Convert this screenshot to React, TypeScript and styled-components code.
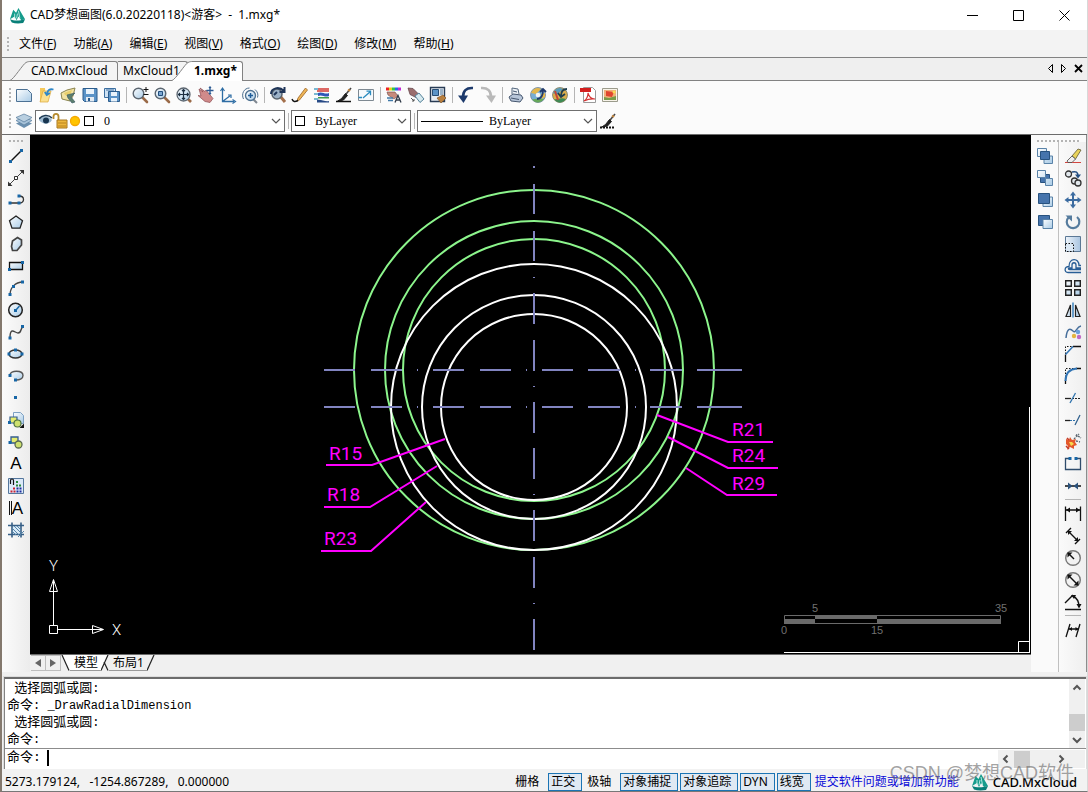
import React from "react";
import styled, { createGlobalStyle } from "styled-components";

const UI = '"Noto Sans", "Noto Sans CJK SC", sans-serif';
const EDGE = "#828282";

const Global = createGlobalStyle`
  * { box-sizing: border-box; }
  body { margin: 0; background: #f0f0f0; font: 12px/16px ${UI}; color: #000; }
  button, input, select { font: inherit; color: inherit; margin: 0; padding: 0; border: 0; background: none; border-radius: 0; }
  svg { display: block; }
`;

const Window = styled.div`
  display: flex;
  flex-direction: column;
  min-height: 100vh;
  border-left: 2px solid #84796e;
  border-right: 1px solid #d8d8d8;
  border-bottom: 1px solid #777;
`;

/* title bar */
const TitleBar = styled.header`
  display: flex;
  align-items: center;
  height: 30px;
  padding-left: 7px;
  background: #fff;
`;
const Title = styled.h1`
  flex: 1;
  margin: 0 0 0 4px;
  font-size: 12px;
  font-weight: 400;
  white-space: pre;
`;
const WinButton = styled.button`
  display: flex;
  align-items: center;
  justify-content: center;
  width: 46px;
  height: 28px;
`;

/* menu bar */
const MenuBar = styled.nav`
  display: flex;
  align-items: center;
  height: 27px;
  padding-left: 5px;
  background: #f3f3f3;
`;
const Grip = styled.span<{ $wide?: number }>`
  flex: none;
  width: ${(p) => (p.$wide ? `${p.$wide}px` : "2px")};
  height: ${(p) => (p.$wide ? "2px" : "14px")};
  margin-right: ${(p) => (p.$wide ? "0" : "2px")};
  background: repeating-linear-gradient(${(p) => (p.$wide ? "90deg" : "180deg")}, #b4b4b4 0 2px, transparent 2px 4px);
`;
const MenuItem = styled.button`
  padding: 0 9px 0 8px;
  height: 22px;
  white-space: nowrap;
`;

/* document tabs */
const TabStrip = styled.div`
  display: flex;
  align-items: flex-end;
  height: 24px;
  padding: 0 3px 0 8px;
  border-top: 1px solid ${EDGE};
  border-bottom: 1px solid ${EDGE};
  background: #efefef;
`;
const DocTabButton = styled.button<{ $active?: boolean }>`
  display: flex;
  position: relative;
  z-index: ${(p) => (p.$active ? 1 : 0)};
  margin-left: ${(p) => (p.$active ? "-16px" : "0")};
  margin-bottom: ${(p) => (p.$active ? "-1px" : "0")};
  height: ${(p) => (p.$active ? "20px" : "19px")};
  font-weight: ${(p) => (p.$active ? 700 : 400)};
`;
const TabLabel = styled.span<{ $active?: boolean; $width: number; $pad: number }>`
  height: 100%;
  width: ${(p) => p.$width}px;
  padding-left: ${(p) => p.$pad}px;
  text-align: left;
  line-height: 18px;
  border-top: 1px solid ${EDGE};
  border-right: 1px solid ${EDGE};
  border-top-right-radius: 3px;
  background: ${(p) => (p.$active ? "#fff" : "#f4f4f4")};
`;
const TabNav = styled.div`
  display: flex;
  gap: 2px;
  margin-left: auto;
  padding-bottom: 2px;
  align-self: center;
`;
const SmallButton = styled.button`
  display: flex;
  align-items: center;
  justify-content: center;
  width: 12px;
  height: 16px;
`;

/* toolbars */
const ToolArea = styled.div`
  background: #fbfbfb;
  border-bottom: 1px solid #6c6c6c;
`;
const ToolRow = styled.div<{ $height: number }>`
  display: flex;
  align-items: center;
  height: ${(p) => p.$height}px;
  padding-left: 7px;
`;
const IconButton = styled.button`
  flex: none;
  display: flex;
  align-items: center;
  justify-content: center;
  width: 22px;
  height: 22px;
`;
const Divider = styled.span<{ $flat?: boolean }>`
  flex: none;
  width: ${(p) => (p.$flat ? "16px" : "1px")};
  height: ${(p) => (p.$flat ? "1px" : "16px")};
  margin: ${(p) => (p.$flat ? "2px 0 3px" : "0 2px 0 3px")};
  background: #b5b5b5;
`;
const Combo = styled.div<{ $width: number }>`
  flex: none;
  display: flex;
  align-items: center;
  width: ${(p) => p.$width}px;
  height: 22px;
  padding: 0 3px;
  border: 1px solid #707070;
  background: #fff;
`;
const ComboSelect = styled.select<{ $pad: number }>`
  flex: 1;
  min-width: 0;
  height: 20px;
  appearance: none;
  padding-left: ${(p) => p.$pad}px;
  font-family: "Liberation Serif", "Noto Sans CJK SC", serif;
`;
const Swatch = styled.span`
  width: 10px;
  height: 10px;
  border: 1px solid #000;
`;
const LineSample = styled.span`
  width: 62px;
  height: 1px;
  background: #000;
`;

/* work area */
const Work = styled.main`
  flex: 1;
  display: flex;
  background: #f0f0f0;
`;
const LeftPanel = styled.aside`
  flex: none;
  width: 28px;
  padding-top: 5px;
  display: flex;
  flex-direction: column;
  align-items: center;
  background: linear-gradient(90deg, #fbfbfb, #ececec);
`;
const ToolColumn = styled.div`
  padding-top: 3px;
`;
const RightPanel = styled.aside`
  flex: none;
  width: 56px;
  display: flex;
  flex-direction: column;
  background: #fafafa;
  border-right: 1px solid #8c8c8c;
`;
const RightGrip = styled.div`
  padding: 5px 0 0 6px;
  display: flex;
`;
const RightColumns = styled.div`
  flex: 1;
  display: flex;
`;
const RightColumn = styled.div<{ $last?: boolean }>`
  width: ${(p) => (p.$last ? "27px" : "28px")};
  padding-top: 3px;
  display: flex;
  flex-direction: column;
  align-items: center;
  border-right: ${(p) => (p.$last ? "0" : "1px solid #c0c0c0")};
  background: ${(p) => (p.$last ? "linear-gradient(90deg, #fafafa, #efefef)" : "#fafafa")};
`;
const Center = styled.section`
  flex: 1;
  min-width: 0;
  display: flex;
  flex-direction: column;
`;
const Canvas = styled.div`
  flex: 1;
  min-height: 400px;
  display: flex;
  background: #000;
  & > svg { flex: 1; min-width: 0; }
`;
const LayoutTabs = styled.div`
  display: flex;
  height: 18px;
  padding-left: 1px;
  background: #f0f0f0;
  border-top: 1px solid #6c6c6c;
`;
const ArrowBox = styled.button`
  display: flex;
  align-items: center;
  justify-content: center;
  width: 15px;
  height: 16px;
  border: 1px solid #bdbdbd;
  border-left: 0;
`;
const LayoutTab = styled.button<{ $active?: boolean }>`
  height: 16px;
  line-height: 15px;
  padding: 0 3px 0 4px;
  background: ${(p) => (p.$active ? "#fff" : "transparent")};
  border-bottom: 1px solid #9a9a9a;
`;

/* command window */
const Command = styled.section`
  margin: 5px 1px 0 2px;
  border-top: 2px solid #6c6c6c;
  border-left: 1px solid #828282;
  background: #fff;
  font: 13px/17px "Liberation Mono", "Noto Sans CJK SC", monospace;
  outline: 1px solid #dcdcdc;
`;
const History = styled.div`
  display: flex;
  height: 70px;
  border-bottom: 1px solid #8c8c8c;
`;
const Log = styled.div`
  flex: 1;
  padding: 1px 0 0 2px;
`;
const LogLine = styled.div`
  height: 17px;
  white-space: pre;
`;
const Latin = styled.span`
  font-size: 12px;
`;
const VScroll = styled.div`
  display: flex;
  flex-direction: column;
  justify-content: space-between;
  align-items: center;
  width: 16px;
  margin-right: 1px;
  background: #f0f0f0;
`;
const Thumb = styled.span<{ $flat?: boolean }>`
  width: 16px;
  height: 17px;
  background: #cdcdcd;
  margin: ${(p) => (p.$flat ? "0 auto 0 0" : "auto 0 0")};
`;
const ScrollButton = styled.button`
  display: flex;
  align-items: center;
  justify-content: center;
  width: 16px;
  height: 17px;
`;
const Prompt = styled.div`
  display: flex;
  align-items: flex-start;
  height: 20px;
  padding: 0 1px 0 2px;
`;
const Caret = styled.span`
  width: 2px;
  height: 16px;
  margin: 1px 0 0 6px;
  background: #000;
`;
const PromptInput = styled.input`
  flex: 1;
  min-width: 0;
  outline: none;
`;
const HScroll = styled.div`
  display: flex;
  align-items: center;
  align-self: center;
  width: 71px;
  height: 18px;
  background: #f0f0f0;
`;
const Corner = styled.span`
  align-self: center;
  width: 16px;
  height: 18px;
  background: #f0f0f0;
`;

/* status bar */
const Status = styled.footer`
  position: relative;
  display: flex;
  align-items: center;
  height: 22px;
  padding: 3px 10px 0 3px;
  background: #f2f2f2;
`;
const Coords = styled.output`
  flex: 1;
  white-space: pre;
`;
const Toggle = styled.button<{ $on?: boolean }>`
  height: 18px;
  margin-right: 2px;
  padding: 0 6px 0 2px;
  line-height: 16px;
  white-space: nowrap;
  border: 1px solid ${(p) => (p.$on ? "#1b74b4" : "transparent")};
  background: ${(p) => (p.$on ? "#dfe9f3" : "transparent")};
`;
const Feedback = styled.a`
  margin: 0 12px 0 2px;
  color: #0a0ad8;
  text-decoration: none;
  white-space: nowrap;
`;
const Brand = styled.span`
  margin-left: 4px;
  font-size: 13px;
  font-weight: 500;
`;
const Watermark = styled.span`
  position: absolute;
  right: 13px;
  bottom: 6px;
  font: 18px/24px "Liberation Sans", "Noto Sans CJK SC", sans-serif;
  color: rgba(110, 110, 110, 0.65);
  white-space: nowrap;
  pointer-events: none;
`;

const B = "#1766a6";
const K = "#111";
const ICE = "url(#ice)";
const BLUE = "url(#blue)";

const Dots = ({ at }: { at: [number, number][] }) => (
  <>{at.map(([x, y]) => <rect key={`${x}-${y}`} x={x - 1.5} y={y - 1.5} width="3" height="3" fill={B} />)}</>
);
const Lens = ({ children }: { children?: React.ReactNode }) => (
  <>
    <path d="M11 11l5 5" stroke="#9a6a48" strokeWidth="2.6" strokeLinecap="round" />
    <circle cx="7.5" cy="7.5" r="5.3" fill={ICE} stroke="#5c6670" strokeWidth="1.4" />
    {children}
  </>
);
const Brush = () => (
  <>
    <path d="M16 2l-6.500 8" stroke="#444" strokeWidth="1.6" />
    <path d="M10.500 7.500l2 2-4 4.500-6 1.200 4-2.700z" fill="#222" stroke="#222" />
    <path d="M13 3.500l2 1.500" stroke="#c98a42" strokeWidth="2" />
  </>
);

const icons: Record<string, React.ReactNode> = {
  new: <path d="M1.500 3.500h11l4 4v8h-15z" fill={ICE} stroke="#4c7194" />,
  open: <><path d="M3 2h5l1 14H3z" fill="#f6c95b" /><path d="M3 16l3-11h8l-3 11z" fill="#fbe08f" stroke="#dba63a" strokeWidth=".7" /><path d="M16.500 3.500c-4-1-6 1-6.500 4.500M7.800 6l2 3 3-2" fill="none" stroke="#2f87c8" strokeWidth="1.800" /></>,
  saveAs: <><path d="M2 7l6-3 8-2-2 8-3 5-8-2z" fill="#f2e2a2" stroke="#8a8450" /><path d="M5 7l8-3-2 6-5-1z" fill="#e9cf6c" /><path d="M8 9l8-2-4 4 4 5-3 1-4-5z" fill="#5b7f6e" stroke="#3e5d66" strokeWidth=".7" /></>,
  save: <><path d="M2 2.500h14v13H3.500L2 14z" fill="#5b93c7" stroke="#2c5d8d" /><path d="M5 3h8v5H5z" fill="#eaf3fb" /><path d="M5 11h8v4.500H5z" fill="#e4ebf2" /><path d="M7 12h2v3H7z" fill="#2c5d8d" /></>,
  saveAll: <><path d="M1.500 2.500h11v9h-11z" fill="#cfe2f3" stroke="#3c6fa0" /><path d="M3 4h8" stroke="#3c6fa0" /><path d="M5.500 5.500h11v10h-11z" fill="#5b93c7" stroke="#2c5d8d" /><path d="M8 6h6v4H8zM8 12h6v3.500H8z" fill="#eaf3fb" /></>,
  zoomPm: <Lens><path d="M12.500 3.500h5M15 1v5M12.500 8.500h5" stroke={K} /></Lens>,
  zoomWin: <Lens><path d="M5.500 5.500h4v4h-4z" fill="#7ba6d0" stroke="#224f7e" /></Lens>,
  zoomExt: <><path d="M12 12l4 4" stroke="#9a6a48" strokeWidth="2.600" /><circle cx="8.500" cy="8.500" r="6.500" fill={ICE} stroke="#5c6670" strokeWidth="1.300" /><path d="M8.500 3.500v10M3.500 8.500h10M7 5l1.500-1.500L10 5M7 12l1.500 1.500L10 12M5 7L3.500 8.500 5 10M12 7l1.500 1.500L12 10" fill="none" stroke="#1d2f42" strokeWidth="1.200" /></>,
  pan: <><path d="M2 3l4 3-3-4 5 3.500 1-1.500 7 8.500-3 4-5-1-7-6 3 .5z" fill="#d08a8a" stroke="#8d4a50" strokeWidth=".7" /><path d="M13 1v7M9.500 4.500h7M12 2l1-1 1 1M12 7l1 1 1-1" fill="none" stroke="#2d5b93" strokeWidth="1.300" /></>,
  axes: <><path d="M3.500 3v12.500H15M3.500 15.500l8-6" fill="none" stroke="#2e6da4" strokeWidth="1.300" /><path d="M1.500 5l2-3 2 3M13.500 13.500l3 2-3 2M9 9h3v3" fill="none" stroke="#2e6da4" strokeWidth="1.200" /></>,
  zoomRt: <><path d="M12 13l4 4" stroke="#7f8790" strokeWidth="2" /><circle cx="9.500" cy="9.500" r="5" fill={ICE} stroke="#4d7090" strokeWidth="1.300" /><path d="M7 9.500h5M9.500 7v5" stroke="#1e5d9a" strokeWidth="1.500" /><path d="M2.500 13C0 8 3 2 8.500 2M14 3.500c2.500 2 3.500 5 2.500 8" fill="none" stroke="#4d7090" /></>,
  find: <><path d="M11 10l5 6" stroke="#a4704c" strokeWidth="3" /><circle cx="8" cy="8" r="5" fill="#9cb2c8" stroke="#59636d" strokeWidth="1.500" /><path d="M2 8c0-6 8-8 13-3M15.500 1v5l-5 0M5 9l3-3" fill="none" stroke="#1f3558" strokeWidth="2" /></>,
  pencil: <><path d="M7 12L14.500 2l2 2-8 10-2.500 1z" fill="#eeb556" stroke="#9b6326" strokeWidth=".8" /><path d="M1 13c1 3 3 3 6 1.500" fill="none" stroke={K} strokeWidth="1.400" /></>,
  layersCol: <><path d="M4 3h12M4 5h12" stroke="#d43a34" strokeWidth="1.700" /><path d="M1 3h4M1 8h5M1 13h4" stroke="#79b8d2" strokeWidth="2" /><path d="M5 7c4-2 7 2 11 0v3c-4 2-7-2-11 0z" fill="#2f57b8" /><path d="M5 11h11v1.500H5z" fill="#3d9c4b" /><path d="M4 14c4-1 8 2 12 1v1.500H4z" fill="#274a86" /></>,
  brush: <><Brush /><path d="M1 15.500h15" stroke={K} strokeWidth="1.500" /></>,
  linkOut: <><path d="M1.500 3.500h15v11h-15z" fill="#f7fafc" stroke="#7e8992" /><path d="M5 11.500h-3.500M6 12l7.500-6.500M9.500 5.200h4v4" fill="none" stroke="#2b8bbf" strokeWidth="1.300" /></>,
  palette: <><path d="M1 1.500h3v3H1z" fill="#e22" /><path d="M4 1.500h3v3H4z" fill="#e5d51c" /><path d="M7 1.500h3v3H7z" fill="#32c44a" /><path d="M10 1.500h3v3h-3z" fill="#286ae4" /><path d="M13 1.500h3v3h-3z" fill="#c22ad2" /><path d="M2 6h8l3 4-4 3-6-4z" fill="#c78a7b" stroke="#724c44" strokeWidth=".6" /><path d="M2 12h6M3 14.500h5" stroke="#4079a8" strokeWidth="1.300" /><path d="M10 16.500l3-7 3 7M11 14h4" fill="none" stroke="#303a48" strokeWidth="1.300" /></>,
  matchProp: <><path d="M1 2l5 .5 6 6-3 3-6-3z" fill="#9a6d6d" stroke="#5d3e45" strokeWidth=".7" /><path d="M8 10l4-3 5 6-4 3.500z" fill="#d6e9ef" stroke="#56839a" /><path d="M4 12l3 3M7 13v2H5" stroke="#555" fill="none" /></>,
  block: <><path d="M1.500 1.500h14v14h-14z" fill="#e8edf3" stroke="#293c55" strokeWidth="1.400" /><path d="M3.500 3.500h6v6h-6z" fill="#5b93c7" stroke="#274d75" /><path d="M11 3h3v6h-3z" fill="#9db4c9" /><path d="M8 12l6-3 3 3-5 5z" fill="#b9803f" stroke="#754c22" strokeWidth=".6" /></>,
  undo: <><path d="M16 2C9 1.500 6 5 6 11" fill="none" stroke="#1d3a6c" strokeWidth="2.600" /><path d="M1 9.500h10L6.500 17z" fill="#1d3a6c" /></>,
  redo: <><path d="M2 2C9 1.500 12 5 12 11" fill="none" stroke="#b9b9b9" strokeWidth="2.600" /><path d="M7 9.500h10L12.500 17z" fill="#b9b9b9" /></>,
  print: <><path d="M5 8V2l6 1 1 5" fill="#edf2f7" stroke="#54677d" /><path d="M2 11l4-3 8 1 2 3-3 4-9-1z" fill="#b7c5d8" stroke="#46576f" /><path d="M4 12l8 1.500M6 5l4 1" stroke="#46576f" /></>,
  world1: <><circle cx="9" cy="9" r="7.500" fill="#79aed2" stroke="#687989" strokeWidth=".7" /><path d="M2 7c2-5 7-6 10-4L7 8z" fill="#e4b74c" /><path d="M3 13c4 1 6-2 12 0-3 4-9 5-12 0z" fill="#66a85a" /><path d="M12 8l4-1 0 4-3 2z" fill="#e4b74c" /><circle cx="9" cy="9" r="2.300" fill="#f4f4f4" /><path d="M8 13c5 0 6-5 6-9M11 6l3-3 3 3" fill="none" stroke="#223a6c" strokeWidth="1.800" /></>,
  world2: <><circle cx="9" cy="9" r="7.500" fill="#d9ad4d" stroke="#6a7062" strokeWidth=".7" /><path d="M2 7c2-5 7-6 10-4L6 9z" fill="#5a9bb8" /><path d="M3 13c4 1 6-2 12 0-3 4-9 5-12 0z" fill="#3d8a55" /><path d="M4 5l3 9" stroke="#c44434" strokeWidth="2" /><path d="M16 3c-4 0-6 2-6 7M7 7l3 4 4-3" fill="none" stroke="#1f3e4e" strokeWidth="1.800" /></>,
  pdf: <><path d="M4.500 1.500h9l3 3v12h-12z" fill="#fff" stroke="#9a9a9a" /><path d="M1 2h11v4H1z" fill="#d41f1f" /><path d="M5 15c3-2 4-5 4-8 1 4 3 6 7 6-4-.5-7 0-11 2" fill="none" stroke="#d43333" strokeWidth="1.100" /></>,
  image: <><path d="M1.500 2.500h15v13h-15z" fill="#f8f4ea" stroke="#9b9b8c" /><path d="M3 4h12v10H3z" fill="#f1b07a" /><path d="M5 5l8 1-2 5-6-1z" fill="#e0452e" /><path d="M3 11l5 1 7-2v4H3z" fill="#7a9b48" /><circle cx="13" cy="6" r="1.500" fill="#f8df52" /></>,
  layers: <><path d="M9 8l8 3.500L9 16 1 11.500z" fill="#6a8faf" /><path d="M9 5l8 3.500L9 13 1 8.500z" fill="#a8c3d9" stroke="#5c7f9f" strokeWidth=".7" /><path d="M9 2l8 3.500L9 10 1 5.500z" fill="#b9cfe0" stroke="#55789a" strokeWidth=".7" /></>,
  brushDash: <><Brush /><path d="M1 15.500h15" stroke={K} strokeWidth="2" strokeDasharray="2 1" /></>,

  line: <><path d="M3.500 14.500l11-11" stroke={K} strokeWidth="1.500" /><Dots at={[[3.500, 14.500], [14.500, 3.500]]} /></>,
  xline: <><path d="M2 16L16 2" stroke="#444" /><path d="M1 12.500V17h4.500zM17 5.500V1h-4.500z" fill="#333" /><path d="M7.500 7.500h3v3h-3z" fill="#fff" stroke="#333" /></>,
  pline: <><path d="M3 12h9M12 5c6 0 6 7 0 7" fill="none" stroke="#333" strokeWidth="1.300" /><Dots at={[[3, 12], [12, 5], [12, 12]]} /></>,
  polygon: <path d="M9 3l6.500 4.800L13 15.200H5L2.500 7.800z" fill={ICE} stroke="#222" strokeWidth="1.300" />,
  freePoly: <path d="M5.500 6l5-3.500 4 2.500v5L10 15.500H5.500l-1-4z" fill={ICE} stroke="#444" strokeWidth="1.700" />,
  rect: <><path d="M2.500 5.500h13v7h-13z" fill={ICE} stroke={K} strokeWidth="1.300" /><Dots at={[[2.500, 12.500], [15.500, 5.500]]} /></>,
  arc: <><path d="M3 16C3 9 8 3 16 3" fill="none" stroke="#444" strokeWidth="1.300" /><Dots at={[[3, 15.500], [6.500, 7.500], [15.500, 3]]} /></>,
  circle: <><circle cx="8.500" cy="9" r="6.800" fill={ICE} stroke="#222" strokeWidth="1.500" /><path d="M8.500 9.500l4-4.500" stroke={B} strokeWidth="1.400" /><Dots at={[[8.500, 9.500]]} /></>,
  spline: <><path d="M3 15c0-12 5-5 8-5 4 0 2-5 5-6" fill="none" stroke="#444" strokeWidth="1.400" /><Dots at={[[3, 15], [15.500, 3.500]]} /></>,
  ellipse: <><ellipse cx="8.500" cy="9" rx="6.500" ry="4" fill={ICE} stroke="#333" strokeWidth="1.400" /><Dots at={[[2, 9], [15, 9], [8.500, 5]]} /></>,
  ellArc: <><path d="M3 8c0-5 13-5 13 .5 0 3-3 4.500-7 4.500" fill={ICE} stroke="#555" strokeWidth="1.400" /><Dots at={[[3, 8.500], [8.500, 13]]} /></>,
  point: <Dots at={[[8.500, 8.500]]} />,
  insert: <><path d="M6.500 1.500h7l3 3v8h-10z" fill={ICE} stroke="#7da1c4" /><path d="M3 6h7v6H3z" fill="#e6ed70" stroke="#345e91" strokeWidth="1.200" /><circle cx="10.500" cy="12.500" r="3.500" fill="#cde06e" stroke="#50743f" strokeWidth="1.200" /><path d="M17 12.500V17h-4.500z" fill={K} /><Dots at={[[2.500, 11.500]]} /></>,
  block2: <><path d="M4 4h7v6H4z" fill="#e6ed70" stroke="#345e91" strokeWidth="1.300" /><circle cx="11.500" cy="11.500" r="3.500" fill="#cde06e" stroke="#59694f" strokeWidth="1.300" /><Dots at={[[3, 9.500]]} /></>,
  pattern: <><path d="M1.500 1.500h15v15h-15z" fill="#dce9f8" stroke="#55779d" /><path d="M3.500 7V3.500c0-2 3-2 3 0V8" fill="none" stroke={K} strokeWidth="1.200" /><path d="M9 5h2M9 8.500h2M12 8.500h2" stroke="#2a8a3a" strokeWidth="2" /><path d="M6 11.500h2M3.500 14.500h2M6.500 14.500h2" stroke="#c23" strokeWidth="2" /><path d="M9.500 11.500h2M12.500 11.500h2M9.500 14.500h2M12.500 14.500h2" stroke="#1e2c9e" strokeWidth="2" /></>,
  hatch: <><path d="M5 4.500h9v9H5z" fill="#d8e9f6" /><path d="M5 1.500v15M14 1.500v15M1 4.500h16M1 13.500h16" stroke="#375f86" strokeWidth="1.600" /><path d="M5 7l7 7M5 10l4 4M7 5l7 7M10 5l4 4M11 16l6-6" stroke="#5585ab" /></>,

  front1: <><path d="M1.500 1.500h9v8h-9zM8 9h8.500v7.500H8z" fill={ICE} stroke="#5a83a8" /><path d="M4.500 4.500h9v8h-9z" fill="#4674ac" stroke="#28527f" /></>,
  front2: <><path d="M4.500 5.500h9v8h-9z" fill="#4674ac" stroke="#28527f" /><path d="M1.500 1.500h8v7h-8zM9.500 9.500h7v7h-7z" fill={ICE} stroke="#5a83a8" /></>,
  front3: <><path d="M7 6h9.500v9.500H7z" fill={ICE} stroke="#5a83a8" /><path d="M2.500 2.500h11v10h-11z" fill="#4674ac" stroke="#28527f" /></>,
  front4: <><path d="M2.500 2.500h11v10h-11z" fill="#4674ac" stroke="#28527f" /><path d="M7 6.500h9.500v9H7z" fill={ICE} stroke="#5a83a8" /></>,
  erase: <><path d="M1 15.500h16" stroke="#d3453f" /><path d="M8 9l6-7 3 1-5.500 9z" fill="#e9d35b" stroke="#5e5831" strokeWidth=".8" /><path d="M3 14l5-5 3.500 3-3.500 3.500H4z" fill="#efefef" stroke="#444" strokeWidth=".8" /></>,
  copy: <><circle cx="4.500" cy="5" r="3" fill="#e2e8ed" stroke="#333" strokeWidth="1.300" /><circle cx="10.500" cy="12" r="3" fill="#e2e8ed" stroke="#333" strokeWidth="1.300" /><circle cx="14" cy="14" r="3" fill="#e2e8ed" stroke="#333" strokeWidth="1.300" /><path d="M8 3c4-1 6 0 6 4" fill="none" stroke="#244f82" strokeWidth="1.500" /><path d="M11 5.500h6L14 9.500z" fill="#244f82" /></>,
  move: <><path d="M9 3v12M3 9h12" stroke="#3b6ba0" strokeWidth="2" /><path d="M9 0.500l3 4H6zM9 17.500l3-4H6zM.5 9l4-3v6zM17.500 9l-4-3v6z" fill="#3b6ba0" /></>,
  rotate: <><path d="M13 4a6.300 6.300 0 1 1-8.500.5" fill="none" stroke="#557b9d" strokeWidth="2.200" /><path d="M1.500 2.500h6.500v6z" fill="#557b9d" /></>,
  scale: <><path d="M1.500 1.500h15v15h-15z" fill={BLUE} stroke="#5b7895" /><path d="M1.500 8.500h8v8h-8z" fill="#dce9f5" stroke={K} strokeDasharray="1.500 1.500" /></>,
  offset: <><path d="M17 15.500H4c-4 0-4-6 1-6 0-9 10-9 10-1h2" fill="none" stroke="#285e96" strokeWidth="1.300" /><path d="M17 12.500H5.500c-1.500 0-1.500-1.500 0-1.500H8V8c0-3 4-3 4 0v3h5" fill="none" stroke="#285e96" strokeWidth="1.300" /></>,
  array: <path d="M1.700 1.700h5.600v5.600H1.700zM10.700 1.700h5.600v5.600h-5.600zM1.700 10.700h5.600v5.600H1.700zM10.700 10.700h5.600v5.600h-5.600z" fill={ICE} stroke="#222" strokeWidth="1.400" />,
  mirror: <><path d="M6.500 4v11.500H2zM11.500 4v11.500H16z" fill={ICE} stroke="#222" strokeWidth="1.200" /><path d="M9 1.500v15" stroke="#2d79b8" strokeWidth="1.400" /></>,
  splineEd: <><path d="M2 15c1-10 4-10 7-7 3 3 3-4 8-5" fill="none" stroke="#476f9b" strokeWidth="1.500" /><circle cx="10" cy="13" r="2.200" fill="#e4b540" /><circle cx="14" cy="9" r="2.200" fill="#6aa0dc" /><circle cx="15" cy="14" r="2.200" fill="#c06bc4" /></>,
  chamfer: <><path d="M1.500 17V9.500M9 1.500h8" stroke={K} strokeWidth="1.300" /><path d="M1.500 9V1.500H9" fill="none" stroke={K} strokeDasharray="1.500 1.500" /><path d="M1.500 9.500L9 1.500" stroke="#3174b4" strokeWidth="1.600" /></>,
  fillet: <><path d="M1.500 17v-4M12 1.500h5" stroke={K} strokeWidth="1.300" /><path d="M1.500 13V1.500H12" fill="none" stroke={K} strokeDasharray="1.500 1.500" /><path d="M1.500 14C1.500 6 6 2 13 1.500" fill="none" stroke="#3174b4" strokeWidth="2" /></>,
  trim: <><path d="M1 9.500h6" stroke="#222" strokeWidth="1.300" /><path d="M8 9.500h9" stroke="#222" strokeDasharray="2 1" /><path d="M6 14l5.500-10" stroke="#2f73ad" strokeWidth="1.300" /></>,
  extend: <><path d="M1 9.500h5" stroke="#222" strokeWidth="1.300" /><path d="M6 9.500h6" stroke="#2f73ad" strokeDasharray="2 1" /><path d="M11 14l5-10" stroke="#2f5f8d" strokeWidth="1.300" /></>,
  explode: <><path d="M2 6l3 1 1-3 2 3 4-1-1 3 2 3-3 1 0 3-4-2-3 3 1-4-2-2z" fill="#e4582b" /><path d="M5 9l3 0 2 2-3 2z" fill="#f7d84a" /><path d="M2 13l3 3M3 5l2 2" stroke="#c23a2a" strokeWidth="1.500" /><path d="M10 6l5-5M14 3l3 2M12 8l4 1M12 3l1-2" stroke="#5b6670" strokeWidth="1.300" strokeDasharray="2 1" /></>,
  breakAt: <><path d="M5 3.500H1.500v11h15v-11H13" fill="none" stroke="#2f4c6c" strokeWidth="1.300" /><Dots at={[[6, 3.500], [12, 3.500]]} /></>,
  join: <><path d="M1 9h16" stroke={K} strokeWidth="1.500" /><path d="M4 5.500L8.500 9 4 12.500zM14 5.500L9.500 9l4.500 3.500z" fill="#2b527c" /></>,
  dimLin: <><path d="M1.500 1.500V16M16.500 1.500V16M2 5h14" stroke={K} strokeWidth="1.300" /><path d="M2 5l4-2.500v5zM16 5l-4-2.500v5z" fill={K} /></>,
  dimAlign: <><path d="M2 6l5-5M11 17l5-5M4.500 4.500l9 9" stroke={K} strokeWidth="1.400" /><path d="M4 4h4L4 8zM14 14h-4l4-4z" fill={K} /></>,
  dimRad: <><circle cx="9" cy="9" r="7.300" fill="#f2f2f2" stroke="#777" strokeWidth="1.400" /><path d="M4 4l6 6" stroke={K} strokeWidth="1.400" /><path d="M3.500 3.500h5l-5 5z" fill={K} /></>,
  dimDia: <><circle cx="9" cy="9" r="7.300" fill="#f2f2f2" stroke="#777" strokeWidth="1.400" /><path d="M4 4l10 10" stroke={K} strokeWidth="1.400" /><path d="M3.500 3.500h5l-5 5zM14.500 14.500h-5l5-5z" fill={K} /></>,
  dimAng: <><path d="M1 16.500h16M1 10L9 2M9 3c4 2 6 5 6 11" fill="none" stroke={K} strokeWidth="1.400" /><path d="M7 2l5 0-2 4zM12.500 11h5L15 15.500z" fill={K} /></>,
  dimObl: <><path d="M2 16L6 3M12 16l4-13M5 8h10" stroke={K} strokeWidth="1.300" /><path d="M5 8l3-2v4zM14.500 8l-3-2v4z" fill={K} /></>,
};

const Glyph = styled.span`
  font: 17px/22px "Liberation Sans", "DejaVu Sans", sans-serif;
`;
const BarGlyph = styled(Glyph)`
  height: 14px;
  border-left: 3px double #111;
  line-height: 15px;
`;

const Tool = ({ name }: { name: string }) => (
  <IconButton aria-label={name}>
    {name === "textA" ? <Glyph>A</Glyph> : name === "textIA" ? <BarGlyph>A</BarGlyph> : (
      <svg width="18" height="18" viewBox="0 0 18 18" fill="none">{icons[name]}</svg>
    )}
  </IconButton>
);
const Tools = ({ list, flat }: { list: string[]; flat?: boolean }) => (
  <>{list.map((n, i) => (n === "|" ? <Divider key={i} $flat={flat} /> : <Tool key={n} name={n} />))}</>
);

const top = "new open saveAs save saveAll | zoomPm zoomWin zoomExt pan axes zoomRt | find pencil layersCol brush linkOut | palette matchProp block | undo redo | print world1 world2 | pdf image".split(" ");
const left = "line xline pline polygon freePoly rect arc circle spline ellipse ellArc point insert block2 textA pattern textIA hatch".split(" ");
const order = "front1 front2 front3 front4".split(" ");
const modify = "erase copy move rotate scale offset array mirror splineEd chamfer fillet trim extend explode breakAt join | dimLin dimAlign dimRad dimDia dimAng | dimObl".split(" ");

const menus = [["文件", "F"], ["功能", "A"], ["编辑", "E"], ["视图", "V"], ["格式", "O"], ["绘图", "D"], ["修改", "M"], ["帮助", "H"]];

const Chevron = ({ dir, bold }: { dir: "up" | "down" | "left" | "right"; bold?: boolean }) => {
  const d = { up: "M1.500 6.500L5 3l3.500 3.500", down: "M1 3l4 4 4-4", left: "M6.500 1.500L3 5l3.500 3.500", right: "M3.500 1.500L7 5 3.500 8.500" }[dir];
  return <svg width="10" height="10" viewBox="0 0 10 10"><path d={d} fill="none" stroke="#555" strokeWidth={bold ? 2 : 1.2} /></svg>;
};

const DocTab = ({ text, width, pad = 0, active, slant }: { text: string; width: number; pad?: number; active?: boolean; slant?: boolean }) => (
  <DocTabButton $active={active}>
    {slant && (
      <svg width="21" height={active ? 20 : 19} viewBox={`0 0 21 ${active ? 20 : 19}`}>
        <path d="M0 19.500C4 18 13 3 16 1.500 18 .5 19 .5 21 .5V20H0z" fill={active ? "#fff" : "#f4f4f4"} />
        <path d="M0 19.500C4 18 13 3 16 1.500 18 .5 19 .5 21 .5" fill="none" stroke={EDGE} />
      </svg>
    )}
    <TabLabel $active={active} $width={width} $pad={pad}>{text}</TabLabel>
  </DocTabButton>
);

const Logo = ({ size }: { size: number }) => (
  <svg width={size} height={size} viewBox="0 0 18 18">
    <path d="M1 13L4.500 3l3 3L10 1l7 12-4 1-3-4-2 4-2-4z" fill="#169c8c" />
    <path d="M6 7v5M10 4l1.500 8M8 12l1-5" stroke="#c6efe8" strokeWidth=".9" />
    <path d="M1 13c4 1.500 9 2 16 0l-2 4c-5 .8-9 .5-12-.5z" fill="#087f78" />
  </svg>
);

const leaders: { text: string; x: number; y: number; points: string }[] = [
  { text: "R15", x: 329, y: 460, points: "326,465 372,465 445,439" },
  { text: "R18", x: 327, y: 501, points: "324,507 370,507 437,466" },
  { text: "R23", x: 324, y: 545, points: "321,551 371,551 426,502" },
  { text: "R21", x: 732, y: 436, points: "773,442 728,442 657,415" },
  { text: "R24", x: 732, y: 462, points: "778,468 728,468 668,437" },
  { text: "R29", x: 732, y: 490, points: "777,495 727,495 686,468" },
];
const AXIS_X = "M324 0h31M371 0h31M433 0h31M480 0h31M542 0h31M588 0h32M650 0h32M697 0h45M417 0h1M526 0h1M635 0h1";
const AXIS_Y = "M534 166v2M534 184v30M534 231v30M534 277v1M534 293v31M534 340v31M534 386v1M534 402v31M534 448v31M534 494v1M534 510v31M534 557v31M534 603v1M534 619v31";

const Drawing = () => (
  <svg viewBox="30 135 1001 519" role="img" aria-label="1.mxg" fill="none" fontFamily="Roboto, sans-serif">
    <g stroke="#8cf58c" strokeWidth="2">
      <circle cx="534" cy="370" r="180" /><circle cx="534" cy="370" r="149" /><circle cx="534" cy="370" r="131" />
    </g>
    <g stroke="#fff" strokeWidth="2">
      <circle cx="534" cy="407" r="143" /><circle cx="534" cy="407" r="112" /><circle cx="534" cy="407" r="93" />
    </g>
    <g stroke="#8184c0" strokeWidth="2">
      <path d={AXIS_X} transform="translate(0 370)" />
      <path d={AXIS_X} transform="translate(0 407)" />
      <path d={AXIS_Y} />
    </g>
    {leaders.map((l) => (
      <g key={l.text}>
        <polyline points={l.points} stroke="#f0f" strokeWidth="2" />
        <text x={l.x} y={l.y} fontSize="19" fill="#f0f">{l.text}</text>
      </g>
    ))}
    <g stroke="#fff">
      <path d="M49.500 625.500h8v8h-8zM57.500 629.500H92M53.500 625V591M92.500 625.500v8l11-4zM49.500 591.500h8l-4-12zM53.500 580v11M93 629.500h10" />
      <path d="M1029.500 407v246M784 652.500h246M1018.500 641.500h11v11h-11z" />
    </g>
    <g fill="#fff" fontSize="15" fontWeight="300">
      <text x="112" y="635">X</text><text x="49" y="571">Y</text>
    </g>
    <path d="M784.500 615.500h216v8h-216z" stroke="#6a6a6a" />
    <path d="M784 619h31v5h-31zM815 615h62v4h-62zM877 619h124v5H877z" fill="#6a6a6a" />
    <g fill="#707070" fontSize="11" textAnchor="middle" fontFamily="Liberation Sans, sans-serif">
      <text x="815" y="612">5</text><text x="1001" y="612">35</text><text x="784" y="634">0</text><text x="877" y="634">15</text>
    </g>
  </svg>
);

const Slash = ({ d, fill, w = 8 }: { d: string; fill?: string; w?: number }) => (
  <svg width={w} height="16" viewBox={`0 0 ${w} 16`}>
    {fill && <path d={fill} fill="#fff" />}
    <path d={d} stroke="#222" fill="none" strokeWidth="1.200" />
  </svg>
);

export default function App() {
  return (
    <Window>
      <Global />
      <svg width="0" height="0" style={{ position: "absolute" }} aria-hidden="true">
        <defs>
          <linearGradient id="ice" x1="0" y1="0" x2="1" y2="1"><stop offset="0" stopColor="#fdfeff" /><stop offset="1" stopColor="#a9cbe6" /></linearGradient>
          <linearGradient id="blue" x1="0" y1="0" x2="1" y2="0"><stop offset="0" stopColor="#eef4fa" /><stop offset="1" stopColor="#a8c4e0" /></linearGradient>
        </defs>
      </svg>

      <TitleBar>
        <Logo size={17} />
        <Title>{"CAD梦想画图(6.0.20220118)<游客>  -  1.mxg*"}</Title>
        <WinButton aria-label="minimize"><svg width="11" height="11"><path d="M0 5.500h11" stroke="#000" /></svg></WinButton>
        <WinButton aria-label="maximize"><svg width="11" height="11"><path d="M.5.500h10v10H.5z" fill="none" stroke="#000" /></svg></WinButton>
        <WinButton aria-label="close"><svg width="11" height="11"><path d="M.5.500l10 10M10.500.500l-10 10" stroke="#000" /></svg></WinButton>
      </TitleBar>

      <MenuBar>
        <Grip />
        {menus.map(([label, key]) => <MenuItem key={key}>{label}(<u>{key}</u>)</MenuItem>)}
      </MenuBar>

      <TabStrip>
        <DocTab text="CAD.MxCloud" width={87} slant />
        <DocTab text="MxCloud1" width={70} pad={5} />
        <DocTab text="1.mxg*" width={50} pad={1} active slant />
        <TabNav>
          <SmallButton aria-label="previous"><svg width="6" height="9"><path d="M5.500.500v8l-4-4z" fill="none" stroke="#000" /></svg></SmallButton>
          <SmallButton aria-label="next"><svg width="6" height="9"><path d="M.500.500v8l4-4z" fill="none" stroke="#000" /></svg></SmallButton>
          <SmallButton aria-label="close tab"><svg width="9" height="9"><path d="M1 1l7 7M8 1L1 8" stroke="#000" strokeWidth="1.800" /></svg></SmallButton>
        </TabNav>
      </TabStrip>

      <ToolArea>
        <ToolRow $height={27}><Grip /><Tools list={top} /></ToolRow>
        <ToolRow $height={26}>
          <Grip />
          <Tool name="layers" />
          <Combo $width={250}>
            <svg width="45" height="18" viewBox="0 0 45 18" fill="none">
              <path d="M0 8c3-5 9-5 13 0-3 5-9 5-13 0z" fill="#9dbad1" /><circle cx="7" cy="8.500" r="3" fill="#17344f" /><path d="M0 7c3-4 9-5 13-1" stroke="#1f3c56" strokeWidth="1.500" />
              <path d="M14.500 7V4.500c0-3.500 5-3.500 5 0V9" stroke="#b5892c" strokeWidth="1.800" /><path d="M18 8h10v8H18z" fill="#edb73e" stroke="#a8781e" /><path d="M19 11h8M19 14h8" stroke="#b98420" />
              <circle cx="36" cy="9" r="4.500" fill="#ffc400" stroke="#f5a800" strokeWidth="1.300" />
            </svg>
            <Swatch />
            <ComboSelect $pad={10} aria-label="layer"><option>0</option></ComboSelect>
            <Chevron dir="down" />
          </Combo>
          <Divider />
          <Combo $width={120}>
            <Swatch />
            <ComboSelect $pad={10} aria-label="color"><option>ByLayer</option></ComboSelect>
            <Chevron dir="down" />
          </Combo>
          <Divider />
          <Combo $width={180}>
            <LineSample />
            <ComboSelect $pad={6} aria-label="line type"><option>ByLayer</option></ComboSelect>
            <Chevron dir="down" />
          </Combo>
          <Tool name="brushDash" />
        </ToolRow>
      </ToolArea>

      <Work>
        <LeftPanel>
          <Grip $wide={14} />
          <ToolColumn><Tools list={left} /></ToolColumn>
        </LeftPanel>
        <Center>
          <Canvas><Drawing /></Canvas>
          <LayoutTabs>
            <ArrowBox aria-label="previous layout"><svg width="6" height="8"><path d="M6 0v8L0 4z" fill="#666" /></svg></ArrowBox>
            <ArrowBox aria-label="next layout"><svg width="6" height="8"><path d="M0 0v8l6-4z" fill="#666" /></svg></ArrowBox>
            <Slash w={9} d="M1 0l7 15.500" fill="M1 0h8v16z" />
            <LayoutTab $active>模型</LayoutTab>
            <Slash d="M0 15.500L7 0M3 7l4 8.500" fill="M0 0h7L0 16z" />
            <LayoutTab>布局1</LayoutTab>
            <Slash d="M0 15.500L7 0" />
          </LayoutTabs>
        </Center>
        <RightPanel>
          <RightGrip><Grip $wide={42} /></RightGrip>
          <RightColumns>
            <RightColumn><Tools list={order} /></RightColumn>
            <RightColumn $last><Tools list={modify} flat /></RightColumn>
          </RightColumns>
        </RightPanel>
      </Work>

      <Command>
        <History>
          <Log>
            <LogLine><Latin> </Latin>选择圆弧或圆<Latin>:</Latin></LogLine>
            <LogLine>命令<Latin>: _DrawRadialDimension</Latin></LogLine>
            <LogLine><Latin> </Latin>选择圆弧或圆<Latin>:</Latin></LogLine>
            <LogLine>命令<Latin>:</Latin></LogLine>
          </Log>
          <VScroll>
            <ScrollButton aria-label="scroll up"><Chevron dir="up" bold /></ScrollButton>
            <Thumb />
            <ScrollButton aria-label="scroll down"><Chevron dir="down" bold /></ScrollButton>
          </VScroll>
        </History>
        <Prompt>
          <label htmlFor="cmd">命令:</label>
          <Caret />
          <PromptInput id="cmd" />
          <HScroll>
            <ScrollButton aria-label="scroll left"><Chevron dir="left" bold /></ScrollButton>
            <Thumb $flat />
            <ScrollButton aria-label="scroll right"><Chevron dir="right" bold /></ScrollButton>
          </HScroll>
          <Corner />
        </Prompt>
      </Command>

      <Status>
        <Coords>{"5273.179124,   -1254.867289,   0.000000"}</Coords>
        <Toggle>栅格</Toggle>
        <Toggle $on>正交</Toggle>
        <Toggle>极轴</Toggle>
        <Toggle $on>对象捕捉</Toggle>
        <Toggle $on>对象追踪</Toggle>
        <Toggle $on>DYN</Toggle>
        <Toggle $on>线宽</Toggle>
        <Feedback href="#feedback">提交软件问题或增加新功能</Feedback>
        <Logo size={18} />
        <Brand>CAD.MxCloud</Brand>
        <Watermark>CSDN @梦想CAD软件</Watermark>
      </Status>
    </Window>
  );
}
